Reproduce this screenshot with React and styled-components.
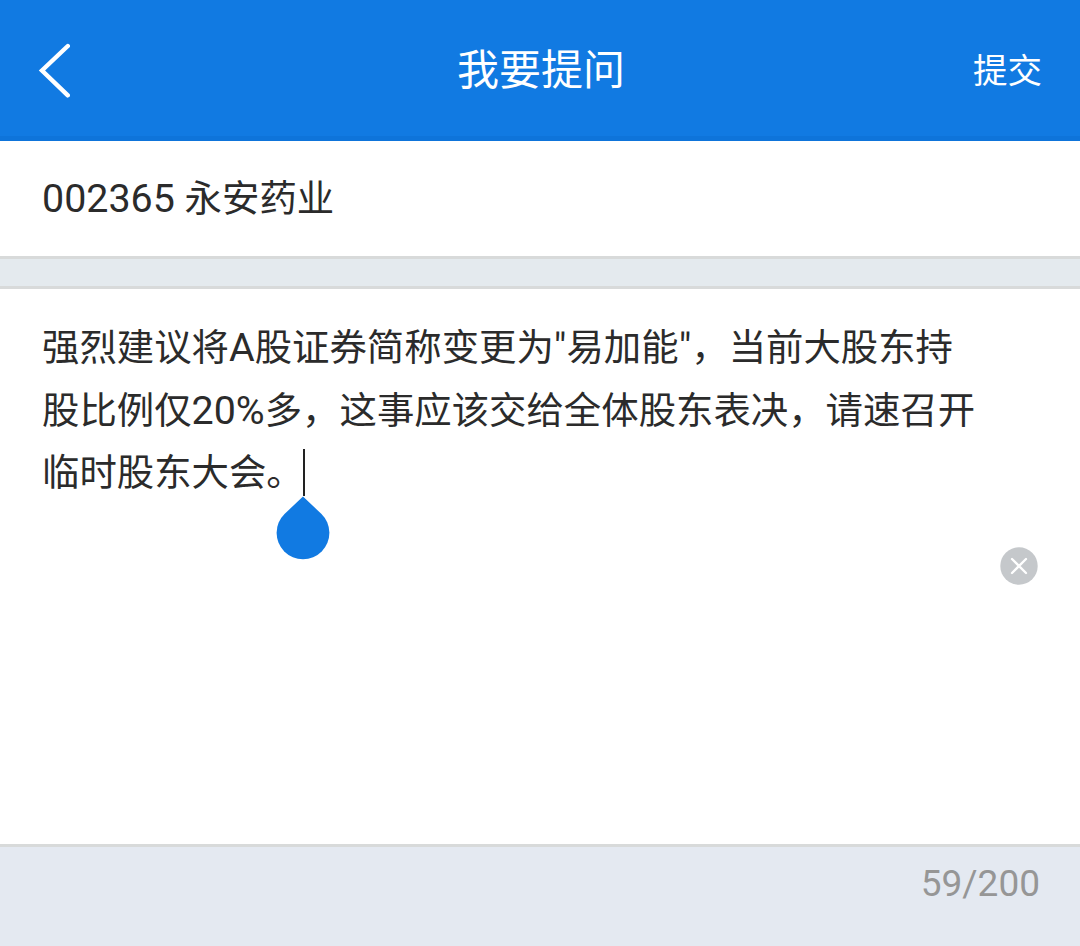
import styled, { createGlobalStyle } from 'styled-components';

const GlobalStyle = createGlobalStyle`
  body {
    margin: 0;
    background: #e4e9f1;
    font-family: Roboto, 'Noto Sans CJK SC', sans-serif;
  }
`

const App = () => {
    return (
        <Page>
            <GlobalStyle />
            <Header>
                <Back aria-label="返回">
                    <svg width="32" height="56" viewBox="0 0 32 56" fill="none" stroke="#fff" strokeWidth="4.4" strokeLinecap="round">
                        <path d="M29.8 3 L4 27.5 L29.8 52.3" />
                    </svg>
                </Back>
                <Title>我要提问</Title>
                <Submit>提交</Submit>
            </Header>
            <Stock><Latin>002365 </Latin>永安药业</Stock>
            <Gap />
            <Question>
                <Line>
                    <span>强烈建议将<Latin>A</Latin>股证券简称变更为<Latin>"</Latin>易加能<Latin>"</Latin>，当前大股东持</span>
                </Line>
                <Line>
                    <span>股比例仅<Latin>20%</Latin>多，这事应该交给全体股东表决，请速召开</span>
                </Line>
                <Line>
                    <span>临时股东大会。</span>
                    <Caret>
                        <Handle width="54" height="64" viewBox="0 0 54 64">
                            <path d="M27 0.5 L45.5 18 A26.4 26.4 0 1 1 8.5 18 Z" fill="#117ae2" />
                        </Handle>
                    </Caret>
                </Line>
                <Clear aria-label="清除">
                    <svg width="38" height="38" viewBox="0 0 38 38">
                        <circle cx="19" cy="19" r="18.7" fill="#c5c8cb" />
                        <path d="M12 12 L26 26 M26 12 L12 26" stroke="#fff" strokeWidth="2.3" strokeLinecap="round" />
                    </svg>
                </Clear>
            </Question>
            <Count>59/200</Count>
        </Page>
    )
}

const Page = styled.div`
    width: 1080px;
    height: 946px;
    overflow: hidden;
    color: #2b2b2b;
    background: #e4e9f1;
`

const Header = styled.header`
    display: grid;
    grid-template-columns: 1fr auto 1fr;
    align-items: center;
    height: 141px;
    padding: 0 38px;
    box-sizing: border-box;
    color: #fff;
    background: #117ae2;
    box-shadow: inset 0 -5px #0e74da;
`

const Button = styled.button`
    display: flex;
    padding: 0;
    border: 0;
    background: none;
    color: inherit;
    font-family: inherit;
`

const Back = styled(Button)`
    justify-self: start;
`

const Title = styled.h1`
    margin: 0;
    padding-left: 2px;
    font-size: 42px;
    font-weight: 400;
    line-height: 60px;
`

const Submit = styled(Button)`
    justify-self: end;
    font-size: 34.5px;
    line-height: 50px;
`

/* digits and latin run slightly larger than the hanzi around them */
const Latin = styled.span`
    font-size: 39.4px;
    white-space: pre;
`

const Stock = styled.div`
    height: 118px;
    padding: 0 42px;
    box-sizing: border-box;
    border-bottom: 3px solid #d8dada;
    background: #fff;
    font-size: 37.4px;
    line-height: 115px;
`

const Gap = styled.div`
    height: 27px;
    background: #e4eaee;
`

const Question = styled.div`
    display: flex;
    flex-direction: column;
    height: 561px;
    padding: 27px 42px 0;
    box-sizing: border-box;
    border-top: 3px solid #d8dada;
    border-bottom: 3px solid #d8dada;
    background: #fff;
`

const Line = styled.div`
    display: flex;
    height: 63px;
    font-size: 37.4px;
    line-height: 63px;
    white-space: nowrap;
`

const Caret = styled.span`
    position: relative;
    width: 2px;
    height: 47px;
    margin: 7px 0 0 -0.5px;
    background: #222;
`

const Handle = styled.svg`
    position: absolute;
    top: 47px;
    left: -27.7px;
`

const Clear = styled(Button)`
    align-self: flex-end;
    margin-top: 42px;
`

const Count = styled.div`
    padding: 14px 40px 0;
    color: #969696;
    font-size: 37px;
    line-height: 46px;
    text-align: right;
`

export default App
